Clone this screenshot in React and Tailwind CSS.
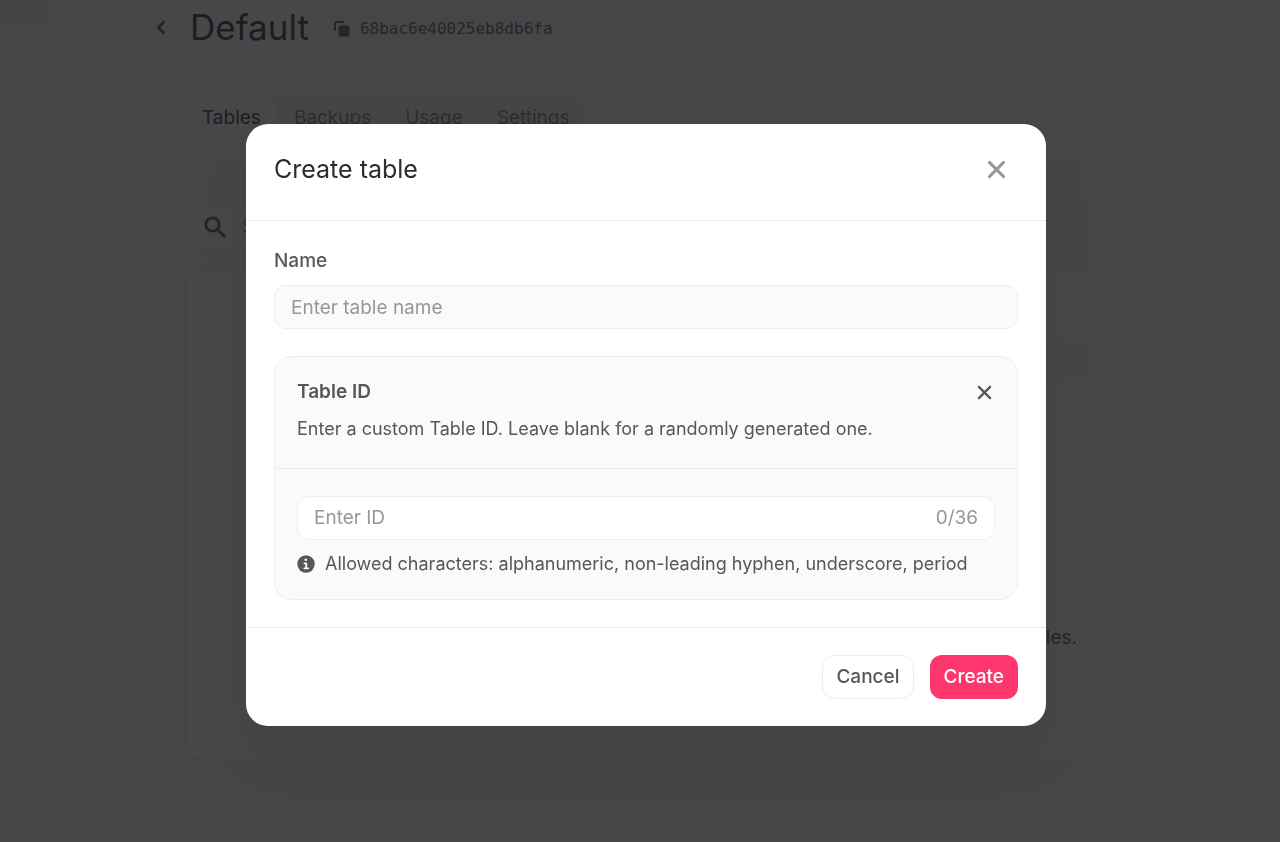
import React, { useState } from "react";

const tabs = ["Backups", "Usage", "Settings"];

function Cross({ className }) {
  return (
    <svg viewBox="0 0 16 16" fill="none" stroke="currentColor" strokeWidth="2.4" strokeLinecap="round" className={className} aria-hidden="true">
      <path d="M2 2l12 12M14 2L2 14" />
    </svg>
  );
}

function Sidebar() {
  return (
    <aside className="flex w-[78px] shrink-0 flex-col justify-between border-r border-[#e8e8eb] bg-white">
      <div className="mr-6 h-[25px] rounded-br-lg bg-[#f4f4f7]" />
      <div className="h-[70px] border-t border-[#e0e0e3]" />
    </aside>
  );
}

function PageHeader() {
  return (
    <header className="border-b border-[#e4e4e7] bg-white pb-[21px] pl-[74px]">
      <div className="flex items-center">
        <button type="button" aria-label="Back" className="mr-5 flex h-[54px] w-[18px] items-center justify-center text-[#56565c]">
          <svg viewBox="0 0 10 16" fill="none" stroke="currentColor" strokeWidth="3" strokeLinecap="round" strokeLinejoin="round" className="h-[15px] w-[10px]" aria-hidden="true">
            <path d="M8 2.2L2.2 8 8 13.8" />
          </svg>
        </button>
        <h1 className="text-[35px] leading-[54px] text-[#2d2d31]">Default</h1>
        <button type="button" className="mt-1 ml-4 flex h-[30px] items-center gap-2.5 rounded-lg border border-[#e8e8eb] bg-[#fafafb] px-2 font-['DejaVu_Sans_Mono',monospace] text-[16px] text-[#56565c]">
          <svg viewBox="0 0 16 16" className="size-4" aria-hidden="true">
            <rect x="4.5" y="4.5" width="11" height="11" rx="2" fill="currentColor" />
            <path d="M1 10V3a2 2 0 0 1 2-2h7.5" fill="none" stroke="currentColor" strokeWidth="2" />
          </svg>
          68bac6e40025eb8db6fa
        </button>
      </div>
      <nav className="mt-[42px] ml-[33px] flex h-11 w-[400px] items-center rounded-xl bg-[#f4f4f7] text-[19px] text-[#818186]">
        <a href="#tables" className="mr-4 flex h-11 items-center rounded-xl border border-[#e8e8eb] bg-white px-4 text-[#2d2d31]">Tables</a>
        <div className="flex gap-[34px]">
          {tabs.map((t) => (
            <a key={t} href={"#" + t.toLowerCase()}>{t}</a>
          ))}
        </div>
      </nav>
    </header>
  );
}

function Page() {
  return (
    <div className="flex min-h-screen overflow-hidden">
      <Sidebar />
      <main className="flex min-w-0 flex-1 flex-col bg-[#fafafb]">
        <PageHeader />
        <div className="flex flex-col pt-[43px] pl-[107px]">
          <label className="flex h-11 w-[390px] items-center gap-4 rounded-xl border border-[#e8e8eb] bg-white pl-[18px]">
            <svg viewBox="0 0 22 22" fill="none" stroke="#56565c" strokeWidth="2.8" strokeLinecap="round" className="size-[22px] shrink-0" aria-hidden="true">
              <circle cx="8.5" cy="8.5" r="6.7" />
              <path d="M13.7 13.7L20.5 20.5" />
            </svg>
            <input type="search" placeholder="Search" className="w-full text-[19px] outline-none placeholder:text-[#97979b]" />
          </label>
          <section className="mt-[21px] h-[490px] rounded-l-2xl border border-r-0 border-[#e4e4e7] bg-white pt-[72px] pr-[86px] pl-[86px]">
            <div className="h-[180px] rounded-t-xl bg-linear-to-b from-[#ececef] to-white p-px">
              <div className="h-full rounded-t-xl bg-linear-to-b from-[#f8f8fa] to-white px-[6px] pt-[37px]">
                <div className="h-full rounded-t-xl bg-white" />
              </div>
            </div>
            <p className="mt-[102px] mr-[117px] text-right text-[19px] leading-[26px] text-[#56565c]">tables.</p>
          </section>
        </div>
      </main>
    </div>
  );
}

function CreateTableDialog() {
  const [name, setName] = useState("");
  const [id, setId] = useState("");
  return (
    <div className="fixed inset-0 flex items-center justify-center bg-[#19191c]/80 pt-2 pl-3">
      <form
        role="dialog"
        aria-labelledby="dialog-title"
        onSubmit={(e) => e.preventDefault()}
        className="w-full max-w-[800px] rounded-[22px] bg-white text-[19px] text-[#56565c] shadow-[0_32px_56px_0_rgba(0,0,0,0.06)]"
      >
        <div className="flex items-start justify-between border-b border-[#ededf0] px-7 pt-7 pb-[34px]">
          <h2 id="dialog-title" className="text-[25px] leading-[34px] text-[#2d2d31]">Create table</h2>
          <button type="button" aria-label="Close" className="flex h-[34px] w-11 items-center justify-center text-[#97979b]">
            <Cross className="size-[19px]" />
          </button>
        </div>
        <div className="px-7 pt-7 pb-[27px]">
          <label htmlFor="table-name" className="block leading-6 font-medium">Name</label>
          <input
            id="table-name"
            value={name}
            onChange={(e) => setName(e.target.value)}
            placeholder="Enter table name"
            className="mt-3 block h-11 w-full rounded-xl border border-[#ededf0] bg-[#fafafa] px-4 outline-none placeholder:text-[#97979b]"
          />
          <section className="mt-[27px] rounded-[18px] border border-[#ededf0] bg-[#fafafa]">
            <div className="border-b border-[#ededf0] px-[22px] pt-[22px] pb-[26px]">
              <div className="flex items-center justify-between">
                <label htmlFor="table-id" className="leading-[26px] font-semibold">Table ID</label>
                <button type="button" aria-label="Remove custom ID" className="flex h-6 w-[22px] items-center justify-center">
                  <Cross className="size-[15px]" />
                </button>
              </div>
              <p className="mt-[11px] text-lg leading-[26px]">Enter a custom Table ID. Leave blank for a randomly generated one.</p>
            </div>
            <div className="px-[22px] pt-[27px] pb-[22px]">
              <div className="flex h-11 items-center rounded-xl border border-[#ededf0] bg-white px-4 text-[#97979b]">
                <input
                  id="table-id"
                  value={id}
                  maxLength={36}
                  onChange={(e) => setId(e.target.value)}
                  placeholder="Enter ID"
                  className="min-w-0 flex-1 outline-none placeholder:text-[#97979b]"
                />
                <span>{id.length}/36</span>
              </div>
              <p className="mt-[11px] flex items-center gap-2.5 text-lg leading-[26px]">
                <svg viewBox="0 0 18 18" className="size-[18px] shrink-0" aria-hidden="true">
                  <circle cx="9" cy="9" r="8.7" fill="currentColor" />
                  <circle cx="8.8" cy="4.8" r="1.3" fill="#fafafa" />
                  <path d="M7.4 8.3h1.8v4.9M7.3 13.3h3.8" fill="none" stroke="#fafafa" strokeWidth="1.8" strokeLinecap="round" strokeLinejoin="round" />
                </svg>
                Allowed characters: alphanumeric, non-leading hyphen, underscore, period
              </p>
            </div>
          </section>
        </div>
        <div className="flex justify-end gap-4 border-t border-[#ededf0] px-7 py-[27px] font-medium">
          <button type="button" className="h-11 rounded-xl border border-[#ededf0] bg-white px-[13px]">Cancel</button>
          <button type="submit" className="h-11 rounded-xl bg-[#fd366e] px-3.5 text-white">Create</button>
        </div>
      </form>
    </div>
  );
}

export default function App() {
  return (
    <div className="font-[Inter,sans-serif]">
      <Page />
      <CreateTableDialog />
    </div>
  );
}
